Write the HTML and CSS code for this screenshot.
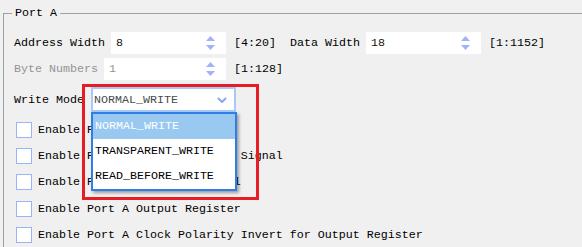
FILE: index.html
```html
<!DOCTYPE html>
<html lang="en">
<head>
  <meta charset="UTF-8">
  <title>Port A</title>
  <link rel="stylesheet" href="styles.css">
</head>
<body>
  <fieldset class="port">
    <legend>Port A</legend>

    <!-- Width settings -->
    <div class="row">
      <div class="field field-main">
        <label>Address Width</label>
        <div class="spin">
          <span>8</span>
          <svg class="arrows" width="9" height="14" viewBox="0 0 9 14"><polygon points="4.5,0 9,5 0,5"/><polygon points="0,9 9,9 4.5,14"/></svg>
        </div>
      </div>
      <span class="range">[4:20]</span>
      <div class="field field-data">
        <label>Data Width</label>
        <div class="spin">
          <span>18</span>
          <svg class="arrows" width="9" height="14" viewBox="0 0 9 14"><polygon points="4.5,0 9,5 0,5"/><polygon points="0,9 9,9 4.5,14"/></svg>
        </div>
      </div>
      <span class="range">[1:1152]</span>
    </div>

    <div class="row row-bytes">
      <div class="field field-main disabled">
        <label>Byte Numbers</label>
        <div class="spin">
          <span>1</span>
          <svg class="arrows" width="9" height="14" viewBox="0 0 9 14"><polygon points="4.5,0 9,5 0,5"/><polygon points="0,9 9,9 4.5,14"/></svg>
        </div>
      </div>
      <span class="range">[1:128]</span>
    </div>

    <!-- Write mode combo with open list -->
    <div class="row row-mode">
      <label>Write Mode</label>
      <div class="combo-wrap">
        <div class="combo">
          <span>NORMAL_WRITE</span>
          <svg class="chevron" width="10" height="6" viewBox="0 0 10 6"><polyline points="1,1 5,5 9,1"/></svg>
        </div>
        <ul class="dropdown">
          <li class="selected">NORMAL_WRITE</li>
          <li>TRANSPARENT_WRITE</li>
          <li>READ_BEFORE_WRITE</li>
        </ul>
        <div class="highlight"></div>
      </div>
    </div>

    <ul class="checks">
      <li><span class="box"></span>Enable Port A Byte Enable</li>
      <li><span class="box"></span>Enable Port A Byte Enable In Signal</li>
      <li><span class="box"></span>Enable Port A Reset In Signal</li>
      <li><span class="box"></span>Enable Port A Output Register</li>
      <li><span class="box"></span>Enable Port A Clock Polarity Invert for Output Register</li>
    </ul>
  </fieldset>
</body>
</html>
```

FILE: styles.css
```css
* {
  margin: 0;
  padding: 0;
  box-sizing: border-box;
}

body {
  background-color: #f0f0f0;
  font-family: "Liberation Mono", "Courier New", monospace;
  font-size: 11.667px;
  color: #000;
  overflow: hidden;
  height: 247px;
}

.port {
  margin: 6px 0 0 3px;
  padding: 0 0 0 10px;
  border: 1px solid #a0a0a0;
  border-right: none;
  border-bottom: none;
  min-width: 0;
  height: 241px;
}

.port legend {
  margin-left: -2px;
  padding: 0 3px;
  line-height: 14px;
}

/* Rows */
.row {
  display: flex;
  align-items: center;
  height: 22px;
  margin-top: 12px;
  white-space: nowrap;
}

.row-bytes {
  margin-top: 4px;
}

.field {
  display: flex;
  align-items: center;
  height: 100%;
}

.field label {
  margin-right: 6px;
}

.field-main {
  width: 212px;
}

.field-main .spin {
  flex: 1;
}

.field-data .spin {
  width: 115px;
}

.spin {
  display: flex;
  align-items: center;
  justify-content: space-between;
  height: 100%;
  background-color: #fff;
  padding: 0 11px 0 5px;
  color: #1a1008;
}

.arrows {
  fill: #9db4fb;
}

.disabled label,
.disabled .spin {
  color: #949494;
}

.range {
  margin-left: 8px;
  margin-right: 14px;
}

/* Write mode */
.row-mode {
  height: 25px;
  margin-top: 7px;
}

.row-mode label {
  margin-right: 7px;
}

.combo-wrap {
  position: relative;
  height: 100%;
}

.combo {
  display: flex;
  align-items: center;
  justify-content: space-between;
  width: 145px;
  height: 100%;
  padding: 0 7px 0 1px;
  background-color: #fff;
  border: 2px solid #a4cbf6;
  color: #4a4a4a;
}

.chevron {
  fill: none;
  stroke: #8ba6f2;
  stroke-width: 2;
}

.dropdown {
  position: absolute;
  top: 25px;
  left: 0;
  width: 146px;
  list-style: none;
  background-color: #fff;
  border: 2px solid #2f7de6;
  box-shadow: 2px 2px 3px rgba(0, 0, 0, 0.35);
  z-index: 10;
}

.dropdown li {
  height: 25px;
  line-height: 25px;
  padding-left: 2px;
}

.dropdown li.selected {
  background-color: #99c9f1;
  color: #fff;
}

.highlight {
  position: absolute;
  top: -3px;
  left: -9px;
  width: 177px;
  height: 116px;
  border: 3px solid #e81c25;
  z-index: 20;
}

/* Checkboxes */
.checks {
  list-style: none;
  margin-top: 5px;
}

.checks li {
  display: flex;
  align-items: center;
  height: 26.2px;
  white-space: nowrap;
}

.box {
  width: 16px;
  height: 16px;
  margin: 0 6px 0 2px;
  background-color: #fff;
  border: 1px solid #9bb2fa;
}
```
